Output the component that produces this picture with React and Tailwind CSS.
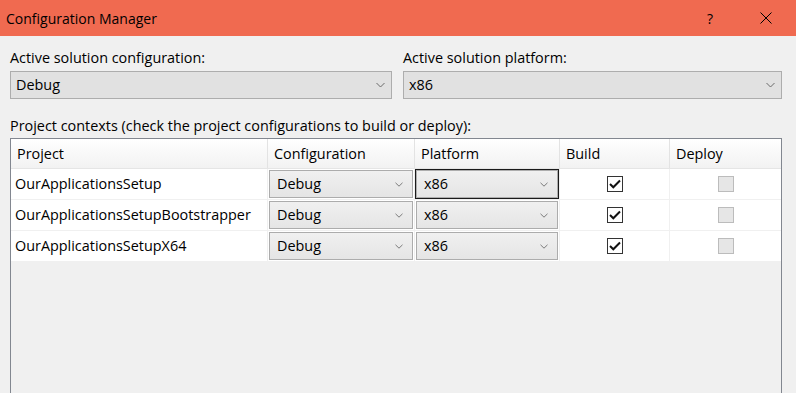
import { useState } from 'react'

const rows = [
  { name: 'OurApplicationsSetup', config: 'Debug', platform: 'x86', build: true, focused: true },
  { name: 'OurApplicationsSetupBootstrapper', config: 'Debug', platform: 'x86', build: true },
  { name: 'OurApplicationsSetupX64', config: 'Debug', platform: 'x86', build: true },
]

const Chevron = () => (
  <svg width="9" height="6" viewBox="0 0 9 6" className="shrink-0">
    <path d="M0.5 1 L4.5 5 L8.5 1" fill="none" stroke="#6b6b6b" strokeWidth="1" />
  </svg>
)

const Combo = ({ value, className = '' }) => (
  <div
    className={`flex items-center justify-between h-[28px] border border-[#adadad] bg-[#e1e1e1] pl-[5px] pr-[6px] ${className}`}
  >
    <span>{value}</span>
    <Chevron />
  </div>
)

const CellCombo = ({ value, focused }) => (
  <div
    className={`flex items-center justify-between h-[28px] border bg-linear-to-b from-[#f0f0f0] to-[#e5e5e5] pl-[7px] pr-[9px] ${
      focused ? 'border-[#adadad] ring-1 ring-[#1a1a1a]' : 'border-[#acacac]'
    }`}
  >
    <span>{value}</span>
    <svg width="8" height="5" viewBox="0 0 8 5" className="shrink-0">
      <path d="M0.5 0.8 L4 4.2 L7.5 0.8" fill="none" stroke="#7a7a7a" strokeWidth="1" />
    </svg>
  </div>
)

const CheckBox = ({ checked, disabled }) => (
  <div
    className={`w-[16px] h-[16px] border flex items-center justify-center ${
      disabled ? 'border-[#bcbcbc] bg-[#e6e6e6]' : 'border-[#333333] bg-white'
    }`}
  >
    {checked && (
      <svg width="12" height="10" viewBox="0 0 12 10">
        <path d="M1 5 L4.3 8.3 L11 1.5" fill="none" stroke="#111" strokeWidth="2" />
      </svg>
    )}
  </div>
)

const App = () => {
  const [selected] = useState(0)

  return (
    <div
      className="w-[796px] h-[393px] overflow-hidden bg-[#f0f0f0] text-[14.4px] text-black flex flex-col"
      style={{ fontFamily: '"Open Sans", "Noto Sans", sans-serif' }}
    >
      {/* Title bar */}
      <div className="h-[36px] shrink-0 bg-[#f06a50] flex items-center">
        <span className="pl-[6px] text-[14px] flex-1">Configuration Manager</span>
        <span className="w-[46px] mr-[10px] text-center text-[14px]">?</span>
        <div className="w-[46px] flex justify-center mr-[7px]">
          <svg width="12" height="12" viewBox="0 0 12 12">
            <path d="M0.5 0.5 L11.5 11.5 M11.5 0.5 L0.5 11.5" stroke="#000" strokeWidth="1" />
          </svg>
        </div>
      </div>

      <div className="flex-1 pl-[10px] pr-[14px] pt-[11px] flex flex-col">
        {/* Active configuration + platform */}
        <div className="grid grid-cols-[382px_1fr] gap-[11px]">
          <div>
            <div className="h-[22px] leading-[22px]">Active solution configuration:</div>
            <Combo value="Debug" className="mt-[2px]" />
          </div>
          <div>
            <div className="h-[22px] leading-[22px]">Active solution platform:</div>
            <Combo value="x86" className="mt-[2px]" />
          </div>
        </div>

        <div className="mt-[16px] h-[22px] leading-[22px]">
          Project contexts (check the project configurations to build or deploy):
        </div>

        {/* Project grid */}
        <div className="mt-[1px] h-[280px] border border-[#828790] shrink-0">
          <div className="grid grid-cols-[257px_147px_145px_110px_1fr] h-[30px] bg-linear-to-b from-white to-[#f2f2f2] border-b border-[#e5e5e5]">
            {['Project', 'Configuration', 'Platform', 'Build', 'Deploy'].map((h, i) => (
              <div
                key={h}
                className={`flex items-center pl-[6px] ${i < 4 ? 'border-r border-[#e3e3e3]' : ''}`}
              >
                {h}
              </div>
            ))}
          </div>
          {rows.map((r, idx) => (
            <div
              key={r.name}
              className="grid grid-cols-[257px_147px_145px_110px_1fr] h-[31px] bg-white border-b border-[#f0f0f0]"
            >
              <div className="flex items-center pl-[4px] border-r border-[#f0f0f0]">{r.name}</div>
              <div className="px-[1px] py-[1px] border-r border-[#f0f0f0]">
                <CellCombo value={r.config} />
              </div>
              <div className="px-[1px] py-[1px] border-r border-[#f0f0f0]">
                <CellCombo value={r.platform} focused={r.focused && selected === idx} />
              </div>
              <div className="flex items-center justify-center border-r border-[#f0f0f0]">
                <CheckBox checked={r.build} />
              </div>
              <div className="flex items-center justify-center">
                <CheckBox disabled />
              </div>
            </div>
          ))}
        </div>
      </div>
    </div>
  )
}

export default App
